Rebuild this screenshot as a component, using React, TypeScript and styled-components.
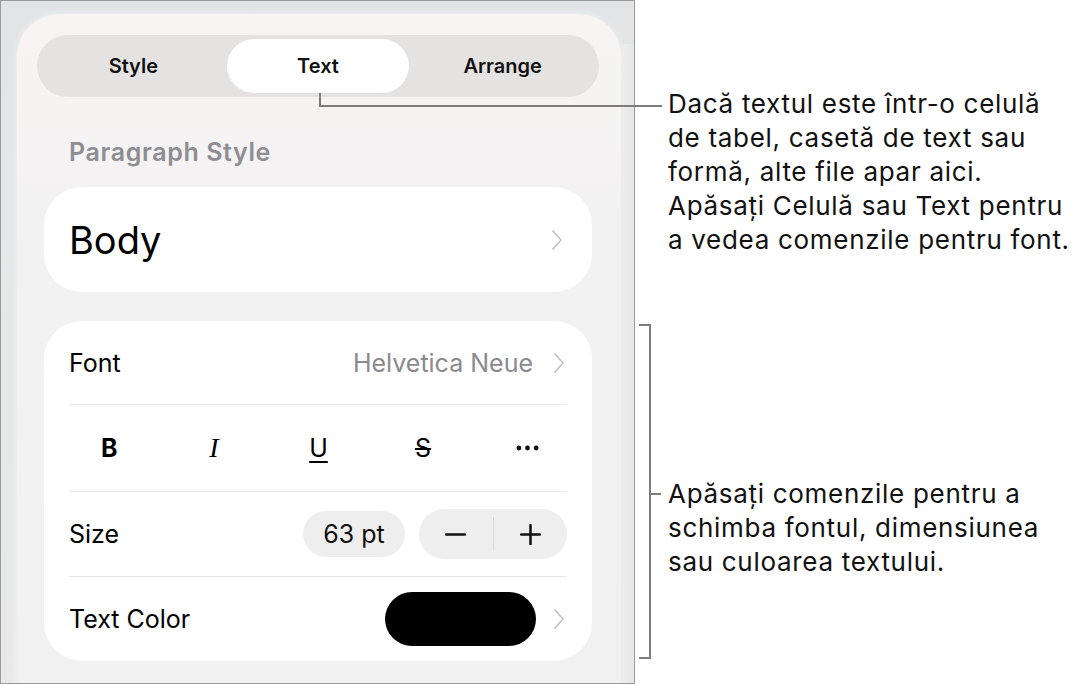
import styled, { createGlobalStyle } from "styled-components";

const GlobalStyle = createGlobalStyle`
  body {
    margin: 0;
    background: #ffffff;
    font-family: Inter, "Liberation Sans", sans-serif;
    color: #000000;
  }
`

export default function App() {
    return (
        <>
            <GlobalStyle/>
            <Page>
                <Device>
                    <Panel>
                        <Segmented>
                            <Tab>Style</Tab>
                            <Tab selected>Text</Tab>
                            <Tab>Arrange</Tab>
                        </Segmented>
                        <SectionTitle>Paragraph Style</SectionTitle>
                        <StyleCard>
                            <BodyLabel>Body</BodyLabel>
                            <Chevron/>
                        </StyleCard>
                        <FontCard>
                            <Row height={83}>
                                <RowLabel>Font</RowLabel>
                                <RowEnd gap={20}>
                                    <RowValue>Helvetica Neue</RowValue>
                                    <Chevron/>
                                </RowEnd>
                            </Row>
                            <Row height={86}>
                                <FormatBar>
                                    <FormatButton>B</FormatButton>
                                    <FormatButton italic>I</FormatButton>
                                    <FormatButton underline>U</FormatButton>
                                    <FormatButton strike>S</FormatButton>
                                    <FormatButton>
                                        <Dots viewBox="0 0 24 6">
                                            <circle cx="3" cy="3" r="2.5"/>
                                            <circle cx="12" cy="3" r="2.5"/>
                                            <circle cx="21" cy="3" r="2.5"/>
                                        </Dots>
                                    </FormatButton>
                                </FormatBar>
                            </Row>
                            <Row height={84}>
                                <RowLabel>Size</RowLabel>
                                <RowEnd gap={14}>
                                    <SizePill>63 pt</SizePill>
                                    <Stepper>
                                        <StepButton>
                                            <StepIcon viewBox="0 0 20 20"><path d="M1 10 H19"/></StepIcon>
                                        </StepButton>
                                        <StepDivider/>
                                        <StepButton>
                                            <StepIcon viewBox="0 0 20 20"><path d="M1 10 H19 M10 1 V19"/></StepIcon>
                                        </StepButton>
                                    </Stepper>
                                </RowEnd>
                            </Row>
                            <Row height={84} last>
                                <RowLabel>Text Color</RowLabel>
                                <RowEnd gap={17}>
                                    <Swatch color="#000000"/>
                                    <Chevron/>
                                </RowEnd>
                            </Row>
                        </FontCard>
                    </Panel>
                    <SideStrip/>
                </Device>
                <Callouts>
                    <Callout top={87}>
                        Dacă textul este într-o celulă<br/>
                        de tabel, casetă de text sau<br/>
                        formă, alte file apar aici.<br/>
                        Apăsați Celulă sau Text pentru<br/>
                        a vedea comenzile pentru font.
                    </Callout>
                    <Callout top={220}>
                        Apăsați comenzile pentru a<br/>
                        schimba fontul, dimensiunea<br/>
                        sau culoarea textului.
                    </Callout>
                </Callouts>
                <Leaders viewBox="0 0 1079 686">
                    <path d="M320 93 V106 H662"/>
                    <path d="M639 325 H650 V658 H639 M650 494 H661"/>
                </Leaders>
            </Page>
        </>
    );
}

function Chevron() {
    return (
        <ChevronSvg viewBox="0 0 12 22">
            <path d="M2 2 L10 11 L2 20"/>
        </ChevronSvg>
    );
}

const Page = styled.div`
  position: relative;
  display: flex;
  width: 1079px;
  height: 686px;
  background: #ffffff;
`
const Device = styled.div`
  display: flex;
  box-sizing: border-box;
  width: 635px;
  height: 684px;
  padding: 13px 0 0 16px;
  border: 1px solid #9a9a9a;
  background: linear-gradient(180deg, #e3e4e5 0%, #e7e8e8 60%, #e9e9e9 100%);
  overflow: hidden;
`
const Panel = styled.div`
  display: flex;
  flex-direction: column;
  box-sizing: border-box;
  width: 604px;
  padding: 21px 22px 0 20px;
  border-radius: 42px 42px 0 0;
  background: linear-gradient(180deg, #f8f4f4 0%, #f3f2f2 30%, #f1f1f1 100%);
  box-shadow: 0 0 6px rgba(255, 255, 255, 0.6);
`
const SideStrip = styled.div`
  flex: 1;
  margin-top: 30px;
  border-left: 1px solid #ececec;
  background: linear-gradient(90deg, #ededed 0%, #e6e6e6 100%);
`
const Segmented = styled.div`
  display: grid;
  grid-template-columns: repeat(3, 1fr);
  height: 62px;
  box-sizing: border-box;
  padding: 4px;
  border-radius: 31px;
  background: #e5e2e2;
`
const Tab = styled.div<{ selected?: boolean }>`
  display: flex;
  align-items: center;
  justify-content: center;
  margin: 0 1px;
  border-radius: 27px;
  font-size: 20px;
  font-weight: 600;
  color: #111111;
  background: ${props => props.selected ? "#ffffff" : "transparent"};
`
const SectionTitle = styled.div`
  margin: 40px 0 0 32px;
  font-size: 25px;
  line-height: 30px;
  font-weight: 600;
  letter-spacing: 0.6px;
  color: #8e8e92;
`
const Card = styled.div`
  margin: 0 7px;
  border-radius: 38px;
  background: #ffffff;
`
const StyleCard = styled(Card)`
  display: flex;
  align-items: center;
  justify-content: space-between;
  height: 105px;
  margin-top: 20px;
  padding: 0 27px 0 25px;
`
const BodyLabel = styled.div`
  font-size: 38px;
  color: #000000;
`
const FontCard = styled(Card)`
  display: flex;
  flex-direction: column;
  margin-top: 29px;
  padding: 0 25px;
`
const Row = styled.div<{ height: number; last?: boolean }>`
  display: flex;
  align-items: center;
  justify-content: space-between;
  height: ${props => props.height}px;
  border-bottom: ${props => props.last ? "none" : "1.5px solid #e6e6e7"};
`
const RowLabel = styled.div`
  font-size: 25px;
  color: #000000;
`
const RowEnd = styled.div<{ gap: number }>`
  display: flex;
  align-items: center;
  gap: ${props => props.gap}px;
`
const RowValue = styled.div`
  font-size: 25px;
  color: #8a8a8e;
`
const ChevronSvg = styled.svg`
  width: 12px;
  height: 22px;
  margin-right: 2px;
  fill: none;
  stroke: #c5c5c8;
  stroke-width: 1.8;
  stroke-linecap: round;
  stroke-linejoin: round;
`
const FormatBar = styled.div`
  display: grid;
  grid-template-columns: repeat(5, 1fr);
  flex: 1;
  margin: 0 -13px 0 -12px;
`
const FormatButton = styled.div<{ italic?: boolean; underline?: boolean; strike?: boolean }>`
  display: flex;
  align-items: center;
  justify-content: center;
  height: 40px;
  font-size: ${props => props.italic ? "28px" : "25px"};
  font-family: ${props => props.italic ? "\"Liberation Serif\", serif" : "Inter, sans-serif"};
  font-style: ${props => props.italic ? "italic" : "normal"};
  font-weight: ${props => props.underline || props.strike || props.italic ? 400 : 700};
  text-decoration: ${props => props.underline ? "underline" : props.strike ? "line-through" : "none"};
  text-decoration-thickness: 2px;
  text-underline-offset: 4px;
  color: #000000;
`
const Dots = styled.svg`
  width: 23px;
  height: 6px;
  fill: #111111;
`
const SizePill = styled.div`
  display: flex;
  align-items: center;
  justify-content: center;
  width: 102px;
  height: 46px;
  border-radius: 23px;
  background: #eeeeef;
  font-size: 25px;
  color: #111111;
`
const Stepper = styled.div`
  display: flex;
  align-items: center;
  width: 148px;
  height: 50px;
  border-radius: 25px;
  background: #eeeeef;
`
const StepButton = styled.div`
  display: flex;
  flex: 1;
  align-items: center;
  justify-content: center;
`
const StepDivider = styled.div`
  width: 1px;
  height: 34px;
  background: #d9d9db;
`
const StepIcon = styled.svg`
  width: 21px;
  height: 21px;
  fill: none;
  stroke: #111111;
  stroke-width: 2.4;
  stroke-linecap: round;
`
const Swatch = styled.div<{ color: string }>`
  width: 151px;
  height: 54px;
  border-radius: 27px;
  background: ${props => props.color};
`
const Callouts = styled.div`
  display: flex;
  flex-direction: column;
  padding-left: 33px;
`
const Callout = styled.div<{ top: number }>`
  margin-top: ${props => props.top}px;
  font-size: 26px;
  line-height: 34px;
  letter-spacing: 0.7px;
  color: #111111;
  white-space: nowrap;
`
const Leaders = styled.svg`
  position: absolute;
  left: 0;
  top: 0;
  width: 1079px;
  height: 686px;
  pointer-events: none;
  fill: none;
  stroke: #7d7d7d;
  stroke-width: 2;
`
